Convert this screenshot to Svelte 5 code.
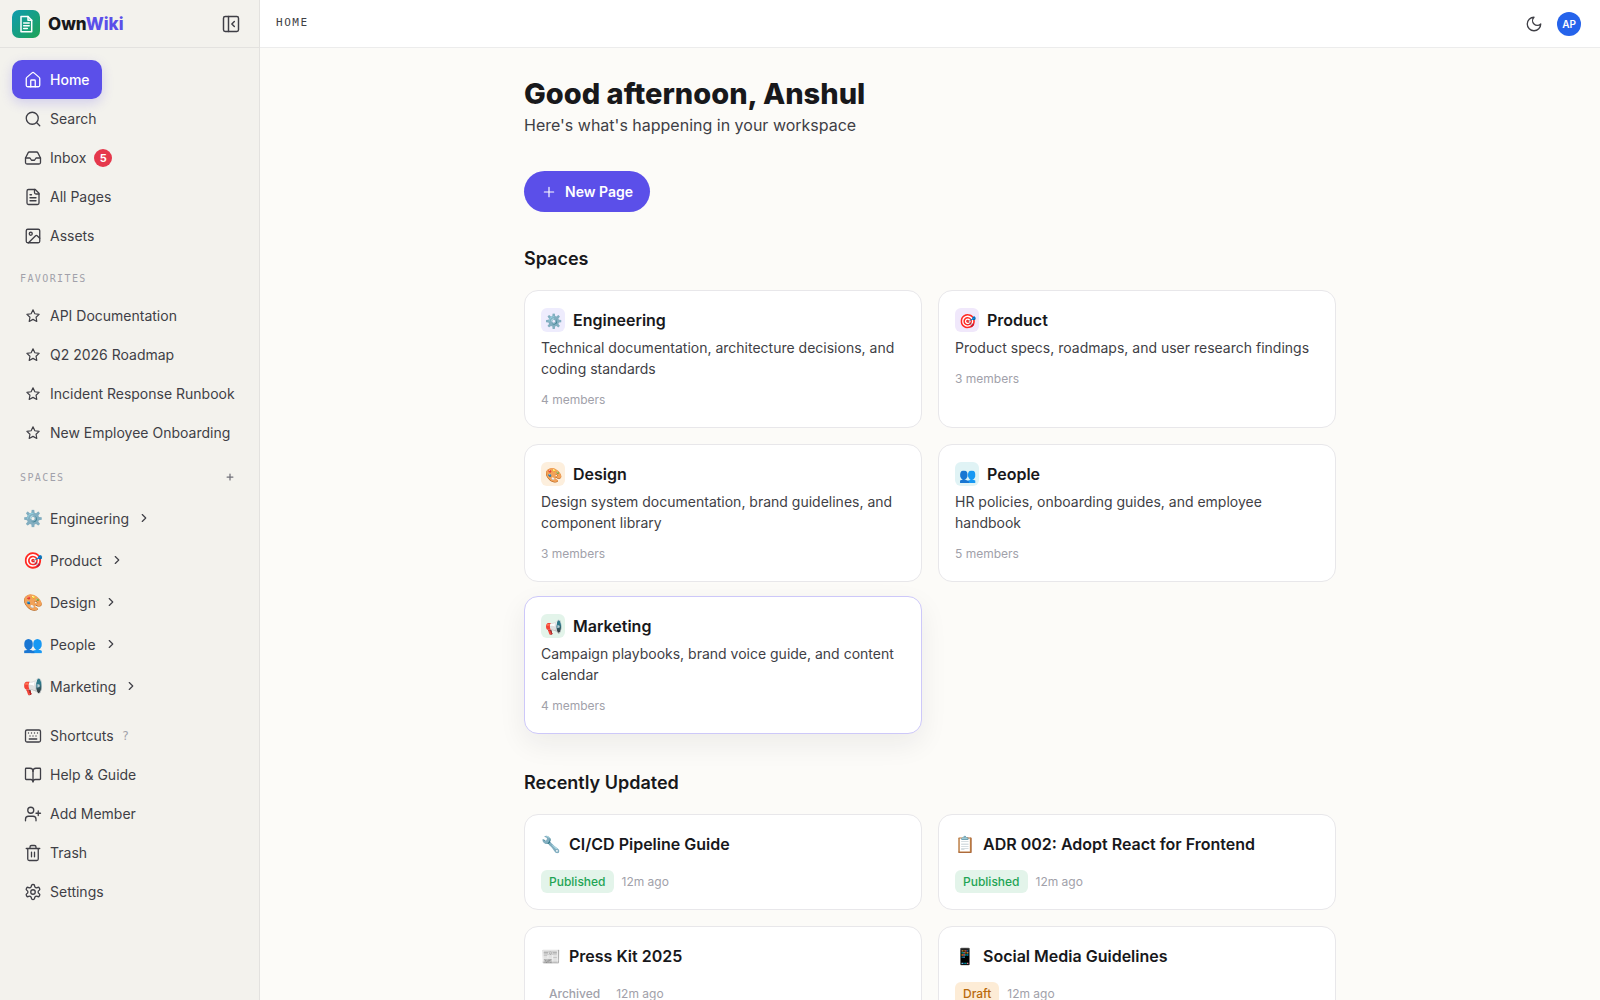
<script>
  const icons = {
    home: '<path d="M15 21v-8a1 1 0 0 0-1-1h-4a1 1 0 0 0-1 1v8"/><path d="M3 10a2 2 0 0 1 .7-1.5l7-6a2 2 0 0 1 2.6 0l7 6A2 2 0 0 1 21 10v9a2 2 0 0 1-2 2H5a2 2 0 0 1-2-2z"/>',
    search: '<circle cx="11" cy="11" r="8"/><path d="m21 21-4.3-4.3"/>',
    inbox:
      '<path d="M22 12h-6l-2 3h-4l-2-3H2"/><path d="M5.45 5.11 2 12v6a2 2 0 0 0 2 2h16a2 2 0 0 0 2-2v-6l-3.45-6.89A2 2 0 0 0 16.76 4H7.24a2 2 0 0 0-1.79 1.11z"/>',
    pages:
      '<path d="M15 2H6a2 2 0 0 0-2 2v16a2 2 0 0 0 2 2h12a2 2 0 0 0 2-2V7z"/><path d="M14 2v4a2 2 0 0 0 2 2h4M10 9H8M16 13H8M16 17H8"/>',
    assets:
      '<rect x="3" y="3" width="18" height="18" rx="2"/><circle cx="9" cy="9" r="2"/><path d="m21 15-3.1-3.1a2 2 0 0 0-2.8 0L6 21"/>',
    star: '<path d="m12 1.5 3.2 6.6 7.3 1-5.3 5 1.3 7.2-6.5-3.5-6.5 3.5 1.3-7.2-5.3-5 7.3-1z"/>',
    chevron: '<path d="m9 18 6-6-6-6"/>',
    plus: '<path d="M5 12h14M12 5v14"/>',
    moon: '<path d="M12 3a6 6 0 0 0 9 9 9 9 0 1 1-9-9z"/>',
    collapse:
      '<rect x="3" y="3" width="18" height="18" rx="2"/><path d="M9 3v18M16 15l-3-3 3-3"/>',
    keyboard:
      '<rect x="2" y="4" width="20" height="16" rx="2"/><path d="M6 8h.01M10 8h.01M14 8h.01M18 8h.01M8 12h.01M12 12h.01M16 12h.01M7 16h10"/>',
    book: '<path d="M12 7v14"/><path d="M3 18a1 1 0 0 1-1-1V4a1 1 0 0 1 1-1h5a4 4 0 0 1 4 4 4 4 0 0 1 4-4h5a1 1 0 0 1 1 1v13a1 1 0 0 1-1 1h-6a3 3 0 0 0-3 3 3 3 0 0 0-3-3z"/>',
    member:
      '<path d="M16 21v-2a4 4 0 0 0-4-4H6a4 4 0 0 0-4 4v2"/><circle cx="9" cy="7" r="4"/><path d="M19 8v6M22 11h-6"/>',
    trash:
      '<path d="M3 6h18M19 6v14a2 2 0 0 1-2 2H7a2 2 0 0 1-2-2V6M8 6V4a2 2 0 0 1 2-2h4a2 2 0 0 1 2 2v2M10 11v6M14 11v6"/>',
    settings:
      '<path d="M12.22 2h-.44a2 2 0 0 0-2 2v.18a2 2 0 0 1-1 1.73l-.43.25a2 2 0 0 1-2 0l-.15-.08a2 2 0 0 0-2.73.73l-.22.38a2 2 0 0 0 .73 2.73l.15.1a2 2 0 0 1 1 1.72v.51a2 2 0 0 1-1 1.74l-.15.09a2 2 0 0 0-.73 2.73l.22.38a2 2 0 0 0 2.73.73l.15-.08a2 2 0 0 1 2 0l.43.25a2 2 0 0 1 1 1.73V20a2 2 0 0 0 2 2h.44a2 2 0 0 0 2-2v-.18a2 2 0 0 1 1-1.73l.43-.25a2 2 0 0 1 2 0l.15.08a2 2 0 0 0 2.73-.73l.22-.39a2 2 0 0 0-.73-2.73l-.15-.08a2 2 0 0 1-1-1.74v-.5a2 2 0 0 1 1-1.74l.15-.09a2 2 0 0 0 .73-2.73l-.22-.38a2 2 0 0 0-2.73-.73l-.15.08a2 2 0 0 1-2 0l-.43-.25a2 2 0 0 1-1-1.73V4a2 2 0 0 0-2-2z"/><circle cx="12" cy="12" r="3"/>',
  };

  let active = $state("Home");

  const mainNav = [
    { label: "Home", icon: "home" },
    { label: "Search", icon: "search" },
    { label: "Inbox", icon: "inbox", count: 5 },
    { label: "All Pages", icon: "pages" },
    { label: "Assets", icon: "assets" },
  ];

  const favorites = [
    "API Documentation",
    "Q2 2026 Roadmap",
    "Incident Response Runbook",
    "New Employee Onboarding",
  ];

  const footerNav = [
    { label: "Shortcuts", icon: "keyboard", hint: "?" },
    { label: "Help & Guide", icon: "book" },
    { label: "Add Member", icon: "member" },
    { label: "Trash", icon: "trash" },
    { label: "Settings", icon: "settings" },
  ];

  const spaces = [
    {
      name: "Engineering",
      emoji: "⚙️",
      tint: "indigo",
      text: "Technical documentation, architecture decisions, and coding standards",
      members: 4,
    },
    {
      name: "Product",
      emoji: "🎯",
      tint: "violet",
      text: "Product specs, roadmaps, and user research findings",
      members: 3,
    },
    {
      name: "Design",
      emoji: "🎨",
      tint: "orange",
      text: "Design system documentation, brand guidelines, and component library",
      members: 3,
    },
    {
      name: "People",
      emoji: "👥",
      tint: "cyan",
      text: "HR policies, onboarding guides, and employee handbook",
      members: 5,
    },
    {
      name: "Marketing",
      emoji: "📢",
      tint: "green",
      text: "Campaign playbooks, brand voice guide, and content calendar",
      members: 4,
      raised: true,
    },
  ];

  const recent = [
    { title: "CI/CD Pipeline Guide", emoji: "🔧", status: "Published", time: "12m ago" },
    { title: "ADR 002: Adopt React for Frontend", emoji: "📋", status: "Published", time: "12m ago" },
    { title: "Press Kit 2025", emoji: "📰", status: "Archived", time: "12m ago" },
    { title: "Social Media Guidelines", emoji: "📱", status: "Draft", time: "12m ago" },
  ];
</script>

{#snippet icon(name, size = 18, stroke = 1.75)}
  <svg
    width={size}
    height={size}
    viewBox="0 0 24 24"
    fill="none"
    stroke="currentColor"
    stroke-width={stroke}
    stroke-linecap="round"
    stroke-linejoin="round"
    aria-hidden="true">{@html icons[name]}</svg
  >
{/snippet}

<div class="app">
  <aside class="sidebar">
    <div class="brand">
      <svg class="logo" width="28" height="28" viewBox="0 0 28 28" aria-hidden="true">
        <defs>
          <linearGradient id="logo-fill" x1="0" y1="0" x2="1" y2="1">
            <stop offset="0" stop-color="#0e9bb0" />
            <stop offset="1" stop-color="#1fa455" />
          </linearGradient>
        </defs>
        <rect width="28" height="28" rx="7" fill="url(#logo-fill)" />
        <g fill="none" stroke="#fff" stroke-width="1.5" stroke-linejoin="round" stroke-linecap="round">
          <path d="M9 6.5h7l3.7 3.7v11.6H9z" />
          <path d="M16 6.5v3.7h3.7M11.7 13h5.5M11.7 15.8h5.5M11.7 18.6h3.6" />
        </g>
      </svg>
      <a class="wordmark" href="#home">Own<span>Wiki</span></a>
      <button class="icon-button" aria-label="Collapse sidebar">{@render icon("collapse", 20, 1.75)}</button>
    </div>

    <div class="menu">
      <nav aria-label="Main">
        {#each mainNav as item}
          <a
            class="item"
            class:active={active === item.label}
            href="#{item.icon}"
            onclick={() => (active = item.label)}
          >
            <span class="slot">{@render icon(item.icon)}</span>
            {item.label}
            {#if item.count}<span class="count">{item.count}</span>{/if}
          </a>
        {/each}
      </nav>

      <h2 class="label">Favorites</h2>
      <nav aria-label="Favorites">
        {#each favorites as fav}
          <a class="item" href="#favorite">
            <span class="slot">{@render icon("star", 14, 2)}</span>
            {fav}
          </a>
        {/each}
      </nav>

      <div class="label with-button">
        <h2>Spaces</h2>
        <button aria-label="Add space">{@render icon("plus", 10, 3)}</button>
      </div>
      <nav aria-label="Spaces">
        {#each spaces as space}
          <a class="item space" href="#space">
            <span class="slot emoji">{space.emoji}</span>
            {space.name}
            <span class="chevron">{@render icon("chevron", 14, 2)}</span>
          </a>
        {/each}
      </nav>

      <nav class="footer" aria-label="Tools">
        {#each footerNav as item}
          <a class="item" href="#{item.icon}">
            <span class="slot">{@render icon(item.icon)}</span>
            {item.label}
            {#if item.hint}<span class="hint">{item.hint}</span>{/if}
          </a>
        {/each}
      </nav>
    </div>
  </aside>

  <div class="page">
    <header class="topbar">
      <span class="crumb">Home</span>
      <button class="icon-button" aria-label="Toggle theme">{@render icon("moon")}</button>
      <button class="avatar" aria-label="Account">AP</button>
    </header>

    <main>
      <div class="content">
        <h1>Good afternoon, Anshul</h1>
        <p class="lead">Here's what's happening in your workspace</p>
        <button class="new-page">{@render icon("plus", 16, 1.75)} New Page</button>

        <section>
          <h2>Spaces</h2>
          <div class="grid">
            {#each spaces as space}
              <a class="card" class:raised={space.raised} href="#space">
                <div class="card-head">
                  <span class="tile {space.tint}">{space.emoji}</span>
                  <h3>{space.name}</h3>
                </div>
                <p>{space.text}</p>
                <div class="members">{space.members} members</div>
              </a>
            {/each}
          </div>
        </section>

        <section>
          <h2>Recently Updated</h2>
          <div class="grid">
            {#each recent as doc}
              <a class="card doc" href="#doc">
                <div class="doc-head">
                  <span class="doc-emoji">{doc.emoji}</span>
                  <h3>{doc.title}</h3>
                </div>
                <div class="meta">
                  <span class="status {doc.status.toLowerCase()}">{doc.status}</span>
                  <time>{doc.time}</time>
                </div>
              </a>
            {/each}
          </div>
        </section>
      </div>
    </main>
  </div>
</div>

<style>
  :global(body) {
    background: #fcfbf8;
  }
  .app {
    display: flex;
    height: 100vh;
    overflow: hidden;
    color: #18181b;
    font-family: Inter, "Noto Sans", sans-serif;
    font-size: 14px;
  }
  .app :global(svg) {
    display: block;
    flex: none;
  }
  a {
    color: inherit;
    text-decoration: none;
  }
  h1,
  h2,
  h3,
  p {
    margin: 0;
  }
  button {
    border: 0;
    padding: 0;
    background: none;
    font: inherit;
    color: inherit;
    cursor: pointer;
  }

  .sidebar {
    display: flex;
    flex-direction: column;
    flex: none;
    box-sizing: border-box;
    width: 260px;
    background: #f3f2ed;
    border-right: 1px solid #e3e2df;
  }
  .brand {
    display: flex;
    align-items: center;
    gap: 8px;
    flex: none;
    box-sizing: border-box;
    height: 48px;
    padding: 0 18px 0 12px;
    border-bottom: 1px solid #e3e2df;
  }
  .wordmark {
    flex: 1;
    font-size: 17px;
    font-weight: 800;
  }
  .wordmark span {
    color: #5b4fe9;
  }
  .icon-button {
    color: #3f3f46;
  }
  .menu {
    flex: 1;
    padding: 12px;
    overflow-y: auto;
    scrollbar-width: none;
  }
  nav {
    display: flex;
    flex-direction: column;
    align-items: flex-start;
  }
  .item {
    display: flex;
    align-items: center;
    gap: 8px;
    height: 39px;
    padding: 0 12px;
    border-radius: 10px;
    color: #3f3f46;
    white-space: nowrap;
  }
  .item.active {
    background: #5b4fe9;
    color: #fff;
    font-weight: 500;
    box-shadow: 0 4px 12px rgba(91, 79, 233, 0.22);
  }
  .slot {
    display: flex;
    justify-content: center;
    width: 18px;
  }
  .count {
    width: 18px;
    border-radius: 9px;
    background: #e5384c;
    color: #fff;
    font-size: 11px;
    font-weight: 700;
    line-height: 18px;
    text-align: center;
  }
  .label {
    margin: 16px 8px 10px;
    color: #a1a1aa;
    font-family: "DejaVu Sans Mono", monospace;
    font-size: 10px;
    font-weight: 400;
    letter-spacing: 0.14em;
    line-height: 15px;
    text-transform: uppercase;
  }
  .with-button {
    display: flex;
    align-items: center;
    justify-content: space-between;
    height: 18px;
    margin-bottom: 11px;
  }
  .with-button h2 {
    font: inherit;
  }
  .with-button button {
    padding: 4px;
    color: #71717a;
  }
  .space {
    height: 42px;
  }
  .emoji {
    font-size: 16px;
  }
  .hint {
    color: #a1a1aa;
    font-family: "DejaVu Sans Mono", monospace;
    font-size: 12px;
  }
  .footer {
    margin-top: 9px;
  }

  .page {
    display: flex;
    flex-direction: column;
    flex: 1;
    min-width: 0;
  }
  .topbar {
    display: flex;
    align-items: center;
    gap: 14px;
    flex: none;
    box-sizing: border-box;
    height: 48px;
    padding: 0 19px 0 16px;
    background: #fff;
    border-bottom: 1px solid #ececec;
  }
  .crumb {
    flex: 1;
    padding-bottom: 2px;
    color: #3f3f46;
    font-family: "DejaVu Sans Mono", monospace;
    font-size: 11px;
    letter-spacing: 0.14em;
    text-transform: uppercase;
  }
  .avatar {
    width: 24px;
    height: 24px;
    border-radius: 50%;
    background: #2563eb;
    color: #fff;
    font-size: 10px;
    font-weight: 600;
  }

  main {
    flex: 1;
    overflow-y: auto;
    scrollbar-width: none;
  }
  .content {
    box-sizing: border-box;
    max-width: 860px;
    margin: 0 auto;
    padding: 28px 24px 48px;
  }
  h1 {
    font-size: 29px;
    font-weight: 800;
    line-height: 36px;
  }
  .lead {
    color: #3f3f46;
    font-size: 16px;
    line-height: 26px;
  }
  .new-page {
    display: flex;
    align-items: center;
    gap: 8px;
    height: 41px;
    margin-top: 33px;
    padding: 0 17px;
    border-radius: 21px;
    background: #5b4fe9;
    color: #fff;
    font-weight: 600;
  }
  section {
    margin-top: 33px;
  }
  section h2 {
    margin-bottom: 17px;
    font-size: 18px;
    font-weight: 600;
    line-height: 28px;
  }
  .grid {
    display: grid;
    grid-template-columns: 1fr 1fr;
    gap: 16px;
  }
  .card {
    padding: 17px 16px 18px;
    border: 1px solid #e8e7ea;
    border-radius: 14px;
    background: #fff;
  }
  .card.raised {
    border-color: #cdc8f9;
    box-shadow: 0 10px 28px rgba(24, 24, 45, 0.07);
    transform: translateY(-2px);
  }
  .card-head {
    display: flex;
    align-items: center;
    gap: 8px;
    margin-bottom: 5px;
  }
  .card h3 {
    font-size: 16px;
    font-weight: 600;
    line-height: 24px;
  }
  .card p {
    color: #3f3f46;
    line-height: 21px;
  }
  .tile {
    display: flex;
    align-items: center;
    justify-content: center;
    width: 24px;
    height: 24px;
    border-radius: 6px;
    font-size: 14px;
  }
  .indigo {
    background: #eeecfd;
  }
  .violet {
    background: #f0e8fb;
  }
  .orange {
    background: #fdefdd;
  }
  .cyan {
    background: #e0f3f5;
  }
  .green {
    background: #e3f4ea;
  }
  .members {
    margin-top: 12px;
    color: #a1a1aa;
    font-size: 12px;
    line-height: 18px;
  }
  .card.doc {
    padding: 16px;
  }
  .doc-head {
    display: flex;
    align-items: center;
    gap: 8px;
    height: 26px;
    margin-bottom: 13px;
  }
  .doc-emoji {
    width: 20px;
    font-size: 16px;
  }
  .meta {
    display: flex;
    align-items: center;
    gap: 8px;
    color: #a1a1aa;
    font-size: 12px;
    line-height: 23px;
  }
  .status {
    padding: 0 8px;
    border-radius: 6px;
    font-weight: 500;
  }
  .published {
    background: #e3f4ea;
    color: #1fa455;
  }
  .draft {
    background: #fdecd6;
    color: #b8690b;
  }
</style>
